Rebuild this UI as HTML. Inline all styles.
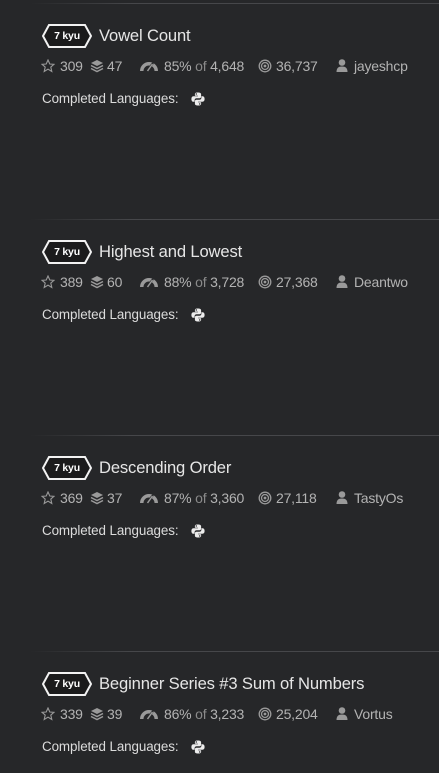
<!DOCTYPE html>
<html style="margin:0;width:439px;height:773px;overflow:hidden;background:#262729"><head><meta charset="utf-8"><style>
body{margin:0;background:#262729;width:439px;height:773px;overflow:hidden;font-family:"Liberation Sans",sans-serif;position:relative}
.b{position:absolute;left:0;width:439px;height:125px}
.ln{position:absolute;top:3px;left:30px;right:0;height:1px;background:linear-gradient(90deg,rgba(70,71,74,0),#46474a 25%,#46474a)}
.badge{position:absolute;left:42px;top:24px;width:50px;height:24px}
.badge span{position:absolute;left:0;top:0;width:50px;line-height:24px;text-align:center;color:#fff;font-weight:bold;font-size:10.5px;letter-spacing:-.2px}
.t{position:absolute;left:99px;top:26px;font-size:16.6px;color:#e6e6e6;white-space:nowrap;letter-spacing:-.15px}
.s{position:absolute;top:58px;font-size:14px;color:#b3b3b3;white-space:nowrap;letter-spacing:-.2px}
.s i{font-style:normal;color:#8a8a8a}
.ic{position:absolute}
.cl{position:absolute;left:42px;top:91px;font-size:13.4px;color:#dcdcdc;letter-spacing:-.1px}
.py{position:absolute;left:191px;top:92px}
</style></head><body>

<div class="b" style="top:0">
<div class="ln"></div>
<svg class="badge" viewBox="0 0 50 24"><polygon points="7,1 43,1 49,12 43,23 7,23 1,12" fill="#1b1b1c" stroke="#f2f2f2" stroke-width="2"/></svg><div class="badge"><span>7 kyu</span></div>
<div class="t">Vowel Count</div>
<svg class="ic" style="left:41px;top:59px" width="14" height="14" viewBox="0 0 14 14"><polygon points="7,1 8.8,5 13,5.3 9.8,8.1 10.8,12.5 7,10.2 3.2,12.5 4.2,8.1 1,5.3 5.2,5" fill="none" stroke="#9a9a9a" stroke-width="1.1"/></svg>
<div class="s" style="left:60px">309</div>
<svg class="ic" style="left:90px;top:59px" width="14" height="14" viewBox="0 0 14 14"><path d="M7 1L13 4 7 7 1 4Z" fill="#9a9a9a"/><path d="M1 6.5L7 9.5 13 6.5M1 9.5L7 12.5 13 9.5" fill="none" stroke="#9a9a9a" stroke-width="1.5"/></svg>
<div class="s" style="left:107px">47</div>
<svg class="ic" style="left:139px;top:59px" width="20" height="14" viewBox="0 0 20 14"><path d="M1 12A9 9 0 0 1 19 12L15.5 12A5.5 5.5 0 0 0 4.5 12Z" fill="#9a9a9a"/><path d="M8 12L14 4" stroke="#262729" stroke-width="2"/><path d="M8.5 12L13.5 5" stroke="#9a9a9a" stroke-width="1.5"/></svg>
<div class="s" style="left:164px">85% <i>of</i> 4,648</div>
<svg class="ic" style="left:258px;top:59px" width="14" height="14" viewBox="0 0 14 14"><circle cx="7" cy="7" r="5.8" fill="none" stroke="#9a9a9a" stroke-width="1.3"/><circle cx="7" cy="7" r="3.5" fill="none" stroke="#9a9a9a" stroke-width="1.3"/><circle cx="7" cy="7" r="1.4" fill="#9a9a9a"/></svg>
<div class="s" style="left:276px">36,737</div>
<svg class="ic" style="left:335px;top:58px" width="14" height="15" viewBox="0 0 14 15"><circle cx="7" cy="4.5" r="3.3" fill="#9a9a9a"/><path d="M1.5 14C1.5 10 3.5 8.5 7 8.5S12.5 10 12.5 14Z" fill="#9a9a9a"/></svg>
<div class="s" style="left:354px">jayeshcp</div>
<div class="cl">Completed Languages:</div>
<svg class="py" width="14" height="14" viewBox="0 0 14 14"><path d="M6.8 0.5C4 0.5 3.9 1.6 3.9 2.3V3.8H7V4.3H2.5C1.2 4.3 0.4 5.3 0.4 7S1.2 9.8 2.3 9.8H3.6V8.1C3.6 7 4.5 6.2 5.6 6.2H8.6C9.5 6.2 10.1 5.5 10.1 4.6V2.3C10.1 1.3 9.2 0.5 6.8 0.5Z" fill="#ececec"/><path d="M7.2 13.5C10 13.5 10.1 12.4 10.1 11.7V10.2H7V9.7H11.5C12.8 9.7 13.6 8.7 13.6 7S12.8 4.2 11.7 4.2H10.4V5.9C10.4 7 9.5 7.8 8.4 7.8H5.4C4.5 7.8 3.9 8.5 3.9 9.4V11.7C3.9 12.7 4.8 13.5 7.2 13.5Z" fill="#ececec"/><circle cx="5.3" cy="2" r=".7" fill="#262729"/><circle cx="8.7" cy="12" r=".7" fill="#262729"/></svg>
</div>

<div class="b" style="top:216px">
<div class="ln"></div>
<svg class="badge" viewBox="0 0 50 24"><polygon points="7,1 43,1 49,12 43,23 7,23 1,12" fill="#1b1b1c" stroke="#f2f2f2" stroke-width="2"/></svg><div class="badge"><span>7 kyu</span></div>
<div class="t">Highest and Lowest</div>
<svg class="ic" style="left:41px;top:59px" width="14" height="14" viewBox="0 0 14 14"><polygon points="7,1 8.8,5 13,5.3 9.8,8.1 10.8,12.5 7,10.2 3.2,12.5 4.2,8.1 1,5.3 5.2,5" fill="none" stroke="#9a9a9a" stroke-width="1.1"/></svg>
<div class="s" style="left:60px">389</div>
<svg class="ic" style="left:90px;top:59px" width="14" height="14" viewBox="0 0 14 14"><path d="M7 1L13 4 7 7 1 4Z" fill="#9a9a9a"/><path d="M1 6.5L7 9.5 13 6.5M1 9.5L7 12.5 13 9.5" fill="none" stroke="#9a9a9a" stroke-width="1.5"/></svg>
<div class="s" style="left:107px">60</div>
<svg class="ic" style="left:139px;top:59px" width="20" height="14" viewBox="0 0 20 14"><path d="M1 12A9 9 0 0 1 19 12L15.5 12A5.5 5.5 0 0 0 4.5 12Z" fill="#9a9a9a"/><path d="M8 12L14 4" stroke="#262729" stroke-width="2"/><path d="M8.5 12L13.5 5" stroke="#9a9a9a" stroke-width="1.5"/></svg>
<div class="s" style="left:164px">88% <i>of</i> 3,728</div>
<svg class="ic" style="left:258px;top:59px" width="14" height="14" viewBox="0 0 14 14"><circle cx="7" cy="7" r="5.8" fill="none" stroke="#9a9a9a" stroke-width="1.3"/><circle cx="7" cy="7" r="3.5" fill="none" stroke="#9a9a9a" stroke-width="1.3"/><circle cx="7" cy="7" r="1.4" fill="#9a9a9a"/></svg>
<div class="s" style="left:276px">27,368</div>
<svg class="ic" style="left:335px;top:58px" width="14" height="15" viewBox="0 0 14 15"><circle cx="7" cy="4.5" r="3.3" fill="#9a9a9a"/><path d="M1.5 14C1.5 10 3.5 8.5 7 8.5S12.5 10 12.5 14Z" fill="#9a9a9a"/></svg>
<div class="s" style="left:354px">Deantwo</div>
<div class="cl">Completed Languages:</div>
<svg class="py" width="14" height="14" viewBox="0 0 14 14"><path d="M6.8 0.5C4 0.5 3.9 1.6 3.9 2.3V3.8H7V4.3H2.5C1.2 4.3 0.4 5.3 0.4 7S1.2 9.8 2.3 9.8H3.6V8.1C3.6 7 4.5 6.2 5.6 6.2H8.6C9.5 6.2 10.1 5.5 10.1 4.6V2.3C10.1 1.3 9.2 0.5 6.8 0.5Z" fill="#ececec"/><path d="M7.2 13.5C10 13.5 10.1 12.4 10.1 11.7V10.2H7V9.7H11.5C12.8 9.7 13.6 8.7 13.6 7S12.8 4.2 11.7 4.2H10.4V5.9C10.4 7 9.5 7.8 8.4 7.8H5.4C4.5 7.8 3.9 8.5 3.9 9.4V11.7C3.9 12.7 4.8 13.5 7.2 13.5Z" fill="#ececec"/><circle cx="5.3" cy="2" r=".7" fill="#262729"/><circle cx="8.7" cy="12" r=".7" fill="#262729"/></svg>
</div>

<div class="b" style="top:432px">
<div class="ln"></div>
<svg class="badge" viewBox="0 0 50 24"><polygon points="7,1 43,1 49,12 43,23 7,23 1,12" fill="#1b1b1c" stroke="#f2f2f2" stroke-width="2"/></svg><div class="badge"><span>7 kyu</span></div>
<div class="t">Descending Order</div>
<svg class="ic" style="left:41px;top:59px" width="14" height="14" viewBox="0 0 14 14"><polygon points="7,1 8.8,5 13,5.3 9.8,8.1 10.8,12.5 7,10.2 3.2,12.5 4.2,8.1 1,5.3 5.2,5" fill="none" stroke="#9a9a9a" stroke-width="1.1"/></svg>
<div class="s" style="left:60px">369</div>
<svg class="ic" style="left:90px;top:59px" width="14" height="14" viewBox="0 0 14 14"><path d="M7 1L13 4 7 7 1 4Z" fill="#9a9a9a"/><path d="M1 6.5L7 9.5 13 6.5M1 9.5L7 12.5 13 9.5" fill="none" stroke="#9a9a9a" stroke-width="1.5"/></svg>
<div class="s" style="left:107px">37</div>
<svg class="ic" style="left:139px;top:59px" width="20" height="14" viewBox="0 0 20 14"><path d="M1 12A9 9 0 0 1 19 12L15.5 12A5.5 5.5 0 0 0 4.5 12Z" fill="#9a9a9a"/><path d="M8 12L14 4" stroke="#262729" stroke-width="2"/><path d="M8.5 12L13.5 5" stroke="#9a9a9a" stroke-width="1.5"/></svg>
<div class="s" style="left:164px">87% <i>of</i> 3,360</div>
<svg class="ic" style="left:258px;top:59px" width="14" height="14" viewBox="0 0 14 14"><circle cx="7" cy="7" r="5.8" fill="none" stroke="#9a9a9a" stroke-width="1.3"/><circle cx="7" cy="7" r="3.5" fill="none" stroke="#9a9a9a" stroke-width="1.3"/><circle cx="7" cy="7" r="1.4" fill="#9a9a9a"/></svg>
<div class="s" style="left:276px">27,118</div>
<svg class="ic" style="left:335px;top:58px" width="14" height="15" viewBox="0 0 14 15"><circle cx="7" cy="4.5" r="3.3" fill="#9a9a9a"/><path d="M1.5 14C1.5 10 3.5 8.5 7 8.5S12.5 10 12.5 14Z" fill="#9a9a9a"/></svg>
<div class="s" style="left:354px">TastyOs</div>
<div class="cl">Completed Languages:</div>
<svg class="py" width="14" height="14" viewBox="0 0 14 14"><path d="M6.8 0.5C4 0.5 3.9 1.6 3.9 2.3V3.8H7V4.3H2.5C1.2 4.3 0.4 5.3 0.4 7S1.2 9.8 2.3 9.8H3.6V8.1C3.6 7 4.5 6.2 5.6 6.2H8.6C9.5 6.2 10.1 5.5 10.1 4.6V2.3C10.1 1.3 9.2 0.5 6.8 0.5Z" fill="#ececec"/><path d="M7.2 13.5C10 13.5 10.1 12.4 10.1 11.7V10.2H7V9.7H11.5C12.8 9.7 13.6 8.7 13.6 7S12.8 4.2 11.7 4.2H10.4V5.9C10.4 7 9.5 7.8 8.4 7.8H5.4C4.5 7.8 3.9 8.5 3.9 9.4V11.7C3.9 12.7 4.8 13.5 7.2 13.5Z" fill="#ececec"/><circle cx="5.3" cy="2" r=".7" fill="#262729"/><circle cx="8.7" cy="12" r=".7" fill="#262729"/></svg>
</div>

<div class="b" style="top:648px">
<div class="ln"></div>
<svg class="badge" viewBox="0 0 50 24"><polygon points="7,1 43,1 49,12 43,23 7,23 1,12" fill="#1b1b1c" stroke="#f2f2f2" stroke-width="2"/></svg><div class="badge"><span>7 kyu</span></div>
<div class="t">Beginner Series #3 Sum of Numbers</div>
<svg class="ic" style="left:41px;top:59px" width="14" height="14" viewBox="0 0 14 14"><polygon points="7,1 8.8,5 13,5.3 9.8,8.1 10.8,12.5 7,10.2 3.2,12.5 4.2,8.1 1,5.3 5.2,5" fill="none" stroke="#9a9a9a" stroke-width="1.1"/></svg>
<div class="s" style="left:60px">339</div>
<svg class="ic" style="left:90px;top:59px" width="14" height="14" viewBox="0 0 14 14"><path d="M7 1L13 4 7 7 1 4Z" fill="#9a9a9a"/><path d="M1 6.5L7 9.5 13 6.5M1 9.5L7 12.5 13 9.5" fill="none" stroke="#9a9a9a" stroke-width="1.5"/></svg>
<div class="s" style="left:107px">39</div>
<svg class="ic" style="left:139px;top:59px" width="20" height="14" viewBox="0 0 20 14"><path d="M1 12A9 9 0 0 1 19 12L15.5 12A5.5 5.5 0 0 0 4.5 12Z" fill="#9a9a9a"/><path d="M8 12L14 4" stroke="#262729" stroke-width="2"/><path d="M8.5 12L13.5 5" stroke="#9a9a9a" stroke-width="1.5"/></svg>
<div class="s" style="left:164px">86% <i>of</i> 3,233</div>
<svg class="ic" style="left:258px;top:59px" width="14" height="14" viewBox="0 0 14 14"><circle cx="7" cy="7" r="5.8" fill="none" stroke="#9a9a9a" stroke-width="1.3"/><circle cx="7" cy="7" r="3.5" fill="none" stroke="#9a9a9a" stroke-width="1.3"/><circle cx="7" cy="7" r="1.4" fill="#9a9a9a"/></svg>
<div class="s" style="left:276px">25,204</div>
<svg class="ic" style="left:335px;top:58px" width="14" height="15" viewBox="0 0 14 15"><circle cx="7" cy="4.5" r="3.3" fill="#9a9a9a"/><path d="M1.5 14C1.5 10 3.5 8.5 7 8.5S12.5 10 12.5 14Z" fill="#9a9a9a"/></svg>
<div class="s" style="left:354px">Vortus</div>
<div class="cl">Completed Languages:</div>
<svg class="py" width="14" height="14" viewBox="0 0 14 14"><path d="M6.8 0.5C4 0.5 3.9 1.6 3.9 2.3V3.8H7V4.3H2.5C1.2 4.3 0.4 5.3 0.4 7S1.2 9.8 2.3 9.8H3.6V8.1C3.6 7 4.5 6.2 5.6 6.2H8.6C9.5 6.2 10.1 5.5 10.1 4.6V2.3C10.1 1.3 9.2 0.5 6.8 0.5Z" fill="#ececec"/><path d="M7.2 13.5C10 13.5 10.1 12.4 10.1 11.7V10.2H7V9.7H11.5C12.8 9.7 13.6 8.7 13.6 7S12.8 4.2 11.7 4.2H10.4V5.9C10.4 7 9.5 7.8 8.4 7.8H5.4C4.5 7.8 3.9 8.5 3.9 9.4V11.7C3.9 12.7 4.8 13.5 7.2 13.5Z" fill="#ececec"/><circle cx="5.3" cy="2" r=".7" fill="#262729"/><circle cx="8.7" cy="12" r=".7" fill="#262729"/></svg>
</div>

</body></html>
